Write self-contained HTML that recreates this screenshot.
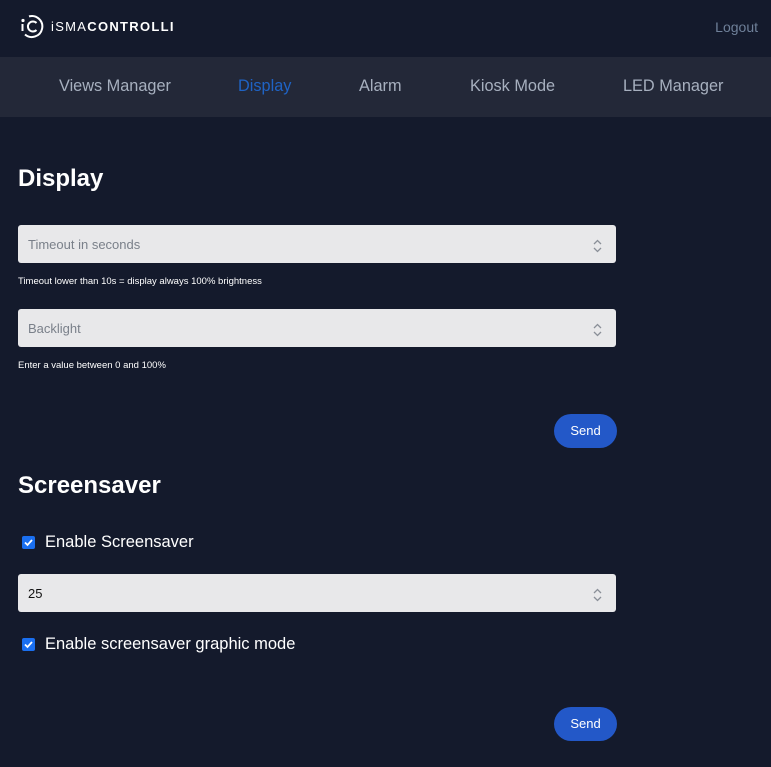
<!DOCTYPE html>
<html><head><meta charset="utf-8"><style>
*{box-sizing:border-box;margin:0;padding:0}
body{width:771px;height:767px;background:#141a2c;font-family:"Liberation Sans",sans-serif;color:#fff;position:relative;overflow:hidden}
.hdr{height:57px;background:#141a2c;position:relative}
.logo{position:absolute;left:20px;top:14px;display:flex;align-items:center}
.logo span{font-size:13px;letter-spacing:1.3px;color:#fff;margin-left:6px}
.logout{position:absolute;right:13px;top:19px;font-size:14px;color:#6f8099}
.nav{height:60px;background:#232838;position:relative}
.nav a{position:absolute;top:20px;font-size:16.3px;color:#a7b0bf;text-decoration:none}
h2{position:absolute;left:18px;font-size:24px;font-weight:bold}
.inp{position:absolute;left:18px;width:598px;height:38px;background:#e8e8ea;border-radius:3px;font-size:13px;color:#7a808a;padding:12px 10px}
.inp svg{position:absolute;right:14px;top:14px}
.hint{position:absolute;left:18px;font-size:9.5px;color:#fff}
.btn{position:absolute;left:554px;width:63px;height:34px;border-radius:17px;background:#2358c8;color:#fff;font-size:13px;text-align:center;line-height:34px}
.chk{position:absolute;left:22px;width:13px;height:13px;background:#1a6ff0;border-radius:2px}
.lbl{position:absolute;left:45px;font-size:16.5px;color:#fff}
</style></head><body>
<div class="hdr">
 <div class="logo">
  <svg width="25" height="25" viewBox="0 0 25 25" fill="none" stroke="#fff" stroke-width="2">
   <path d="M9 2.4 A10.5 10.5 0 1 1 5 20.5" />
   <path d="M16.5 9 A5 5 0 1 0 16.5 16"/>
   <line x1="2.5" y1="10" x2="2.5" y2="17"/>
   <circle cx="3" cy="6.5" r="0.6" fill="#fff"/>
  </svg>
  <span>iSMA<b>CONTROLLI</b></span>
 </div>
 <div class="logout">Logout</div>
</div>
<div class="nav">
 <a style="left:59px">Views Manager</a>
 <a style="left:238px;color:#1f63c4">Display</a>
 <a style="left:359px">Alarm</a>
 <a style="left:470px">Kiosk Mode</a>
 <a style="left:623px">LED Manager</a>
</div>
<h2 style="top:165px">Display</h2>
<div class="inp" style="top:225px">Timeout in seconds<svg width="9" height="14" viewBox="0 0 9 14" fill="none" stroke="#8a8f98" stroke-width="1.3"><path d="M1 5 L4.5 1.5 L8 5 M1 9 L4.5 12.5 L8 9"/></svg></div>
<div class="hint" style="top:276px">Timeout lower than 10s = display always 100% brightness</div>
<div class="inp" style="top:309px">Backlight<svg width="9" height="14" viewBox="0 0 9 14" fill="none" stroke="#8a8f98" stroke-width="1.3"><path d="M1 5 L4.5 1.5 L8 5 M1 9 L4.5 12.5 L8 9"/></svg></div>
<div class="hint" style="top:360px">Enter a value between 0 and 100%</div>
<div class="btn" style="top:414px">Send</div>
<h2 style="top:472px">Screensaver</h2>
<div class="chk" style="top:536px"><svg width="13" height="13" viewBox="0 0 13 13"><path d="M3 6.5 L5.5 9 L10 4" stroke="#fff" stroke-width="1.8" fill="none"/></svg></div>
<div class="lbl" style="top:533px">Enable Screensaver</div>
<div class="inp" style="top:574px;color:#111">25<svg width="9" height="14" viewBox="0 0 9 14" fill="none" stroke="#8a8f98" stroke-width="1.3"><path d="M1 5 L4.5 1.5 L8 5 M1 9 L4.5 12.5 L8 9"/></svg></div>
<div class="chk" style="top:638px"><svg width="13" height="13" viewBox="0 0 13 13"><path d="M3 6.5 L5.5 9 L10 4" stroke="#fff" stroke-width="1.8" fill="none"/></svg></div>
<div class="lbl" style="top:635px">Enable screensaver graphic mode</div>
<div class="btn" style="top:707px">Send</div>
</body></html>
